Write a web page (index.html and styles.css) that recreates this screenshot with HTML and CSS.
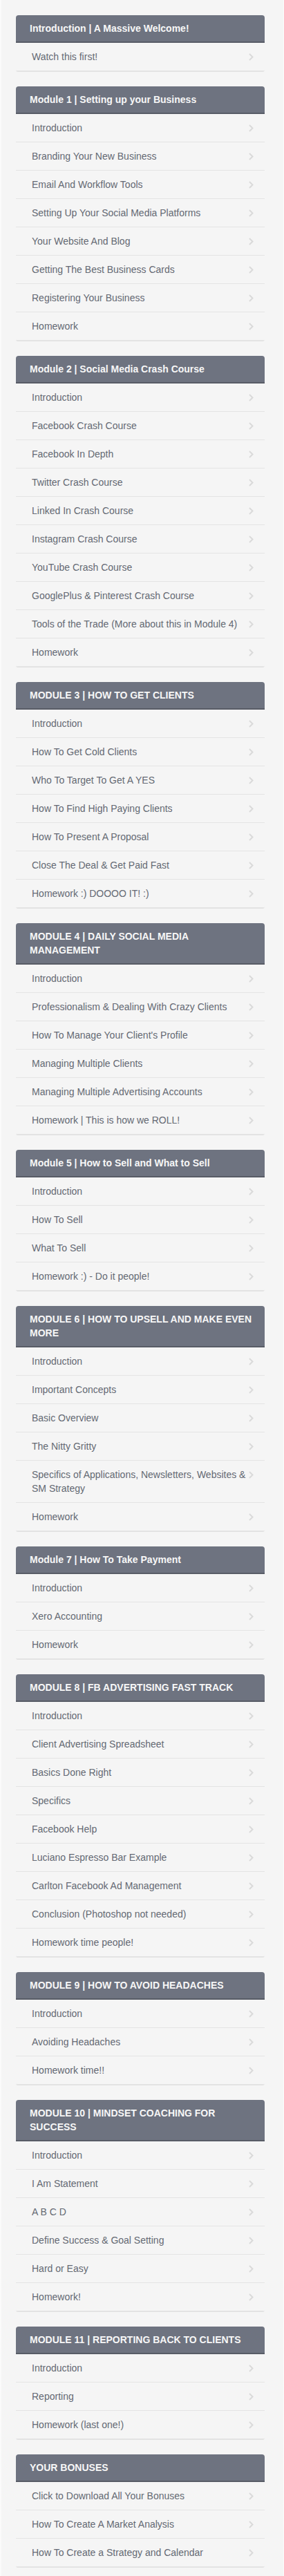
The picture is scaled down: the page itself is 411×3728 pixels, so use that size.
FILE: index.html
```html
<!DOCTYPE html>
<html lang="en">
<head>
<meta charset="utf-8">
<title>Course Curriculum</title>
<link rel="stylesheet" href="styles.css">
</head>
<body>
<div class="page">
  <section class="card">
    <h2 class="card-title">Introduction | A Massive Welcome!</h2>
    <ul class="lessons">
      <li class="lesson"><span class="lesson-name">Watch this first!</span><span class="chev"><svg width="7" height="11" viewBox="0 0 7 11"><polyline points="1,1 5.5,5.5 1,10"/></svg></span></li>
    </ul>
  </section>

  <section class="card">
    <h2 class="card-title">Module 1 | Setting up your Business</h2>
    <ul class="lessons">
      <li class="lesson"><span class="lesson-name">Introduction</span><span class="chev"><svg width="7" height="11" viewBox="0 0 7 11"><polyline points="1,1 5.5,5.5 1,10"/></svg></span></li>
      <li class="lesson"><span class="lesson-name">Branding Your New Business</span><span class="chev"><svg width="7" height="11" viewBox="0 0 7 11"><polyline points="1,1 5.5,5.5 1,10"/></svg></span></li>
      <li class="lesson"><span class="lesson-name">Email And Workflow Tools</span><span class="chev"><svg width="7" height="11" viewBox="0 0 7 11"><polyline points="1,1 5.5,5.5 1,10"/></svg></span></li>
      <li class="lesson"><span class="lesson-name">Setting Up Your Social Media Platforms</span><span class="chev"><svg width="7" height="11" viewBox="0 0 7 11"><polyline points="1,1 5.5,5.5 1,10"/></svg></span></li>
      <li class="lesson"><span class="lesson-name">Your Website And Blog</span><span class="chev"><svg width="7" height="11" viewBox="0 0 7 11"><polyline points="1,1 5.5,5.5 1,10"/></svg></span></li>
      <li class="lesson"><span class="lesson-name">Getting The Best Business Cards</span><span class="chev"><svg width="7" height="11" viewBox="0 0 7 11"><polyline points="1,1 5.5,5.5 1,10"/></svg></span></li>
      <li class="lesson"><span class="lesson-name">Registering Your Business</span><span class="chev"><svg width="7" height="11" viewBox="0 0 7 11"><polyline points="1,1 5.5,5.5 1,10"/></svg></span></li>
      <li class="lesson"><span class="lesson-name">Homework</span><span class="chev"><svg width="7" height="11" viewBox="0 0 7 11"><polyline points="1,1 5.5,5.5 1,10"/></svg></span></li>
    </ul>
  </section>

  <section class="card">
    <h2 class="card-title">Module 2 | Social Media Crash Course</h2>
    <ul class="lessons">
      <li class="lesson"><span class="lesson-name">Introduction</span><span class="chev"><svg width="7" height="11" viewBox="0 0 7 11"><polyline points="1,1 5.5,5.5 1,10"/></svg></span></li>
      <li class="lesson"><span class="lesson-name">Facebook Crash Course</span><span class="chev"><svg width="7" height="11" viewBox="0 0 7 11"><polyline points="1,1 5.5,5.5 1,10"/></svg></span></li>
      <li class="lesson"><span class="lesson-name">Facebook In Depth</span><span class="chev"><svg width="7" height="11" viewBox="0 0 7 11"><polyline points="1,1 5.5,5.5 1,10"/></svg></span></li>
      <li class="lesson"><span class="lesson-name">Twitter Crash Course</span><span class="chev"><svg width="7" height="11" viewBox="0 0 7 11"><polyline points="1,1 5.5,5.5 1,10"/></svg></span></li>
      <li class="lesson"><span class="lesson-name">Linked In Crash Course</span><span class="chev"><svg width="7" height="11" viewBox="0 0 7 11"><polyline points="1,1 5.5,5.5 1,10"/></svg></span></li>
      <li class="lesson"><span class="lesson-name">Instagram Crash Course</span><span class="chev"><svg width="7" height="11" viewBox="0 0 7 11"><polyline points="1,1 5.5,5.5 1,10"/></svg></span></li>
      <li class="lesson"><span class="lesson-name">YouTube Crash Course</span><span class="chev"><svg width="7" height="11" viewBox="0 0 7 11"><polyline points="1,1 5.5,5.5 1,10"/></svg></span></li>
      <li class="lesson"><span class="lesson-name">GooglePlus &amp; Pinterest Crash Course</span><span class="chev"><svg width="7" height="11" viewBox="0 0 7 11"><polyline points="1,1 5.5,5.5 1,10"/></svg></span></li>
      <li class="lesson"><span class="lesson-name">Tools of the Trade (More about this in Module 4)</span><span class="chev"><svg width="7" height="11" viewBox="0 0 7 11"><polyline points="1,1 5.5,5.5 1,10"/></svg></span></li>
      <li class="lesson"><span class="lesson-name">Homework</span><span class="chev"><svg width="7" height="11" viewBox="0 0 7 11"><polyline points="1,1 5.5,5.5 1,10"/></svg></span></li>
    </ul>
  </section>

  <section class="card">
    <h2 class="card-title">MODULE 3 | HOW TO GET CLIENTS</h2>
    <ul class="lessons">
      <li class="lesson"><span class="lesson-name">Introduction</span><span class="chev"><svg width="7" height="11" viewBox="0 0 7 11"><polyline points="1,1 5.5,5.5 1,10"/></svg></span></li>
      <li class="lesson"><span class="lesson-name">How To Get Cold Clients</span><span class="chev"><svg width="7" height="11" viewBox="0 0 7 11"><polyline points="1,1 5.5,5.5 1,10"/></svg></span></li>
      <li class="lesson"><span class="lesson-name">Who To Target To Get A YES</span><span class="chev"><svg width="7" height="11" viewBox="0 0 7 11"><polyline points="1,1 5.5,5.5 1,10"/></svg></span></li>
      <li class="lesson"><span class="lesson-name">How To Find High Paying Clients</span><span class="chev"><svg width="7" height="11" viewBox="0 0 7 11"><polyline points="1,1 5.5,5.5 1,10"/></svg></span></li>
      <li class="lesson"><span class="lesson-name">How To Present A Proposal</span><span class="chev"><svg width="7" height="11" viewBox="0 0 7 11"><polyline points="1,1 5.5,5.5 1,10"/></svg></span></li>
      <li class="lesson"><span class="lesson-name">Close The Deal &amp; Get Paid Fast</span><span class="chev"><svg width="7" height="11" viewBox="0 0 7 11"><polyline points="1,1 5.5,5.5 1,10"/></svg></span></li>
      <li class="lesson"><span class="lesson-name">Homework :) DOOOO IT! :)</span><span class="chev"><svg width="7" height="11" viewBox="0 0 7 11"><polyline points="1,1 5.5,5.5 1,10"/></svg></span></li>
    </ul>
  </section>

  <section class="card">
    <h2 class="card-title">MODULE 4 | DAILY SOCIAL MEDIA MANAGEMENT</h2>
    <ul class="lessons">
      <li class="lesson"><span class="lesson-name">Introduction</span><span class="chev"><svg width="7" height="11" viewBox="0 0 7 11"><polyline points="1,1 5.5,5.5 1,10"/></svg></span></li>
      <li class="lesson"><span class="lesson-name">Professionalism &amp; Dealing With Crazy Clients</span><span class="chev"><svg width="7" height="11" viewBox="0 0 7 11"><polyline points="1,1 5.5,5.5 1,10"/></svg></span></li>
      <li class="lesson"><span class="lesson-name">How To Manage Your Client's Profile</span><span class="chev"><svg width="7" height="11" viewBox="0 0 7 11"><polyline points="1,1 5.5,5.5 1,10"/></svg></span></li>
      <li class="lesson"><span class="lesson-name">Managing Multiple Clients</span><span class="chev"><svg width="7" height="11" viewBox="0 0 7 11"><polyline points="1,1 5.5,5.5 1,10"/></svg></span></li>
      <li class="lesson"><span class="lesson-name">Managing Multiple Advertising Accounts</span><span class="chev"><svg width="7" height="11" viewBox="0 0 7 11"><polyline points="1,1 5.5,5.5 1,10"/></svg></span></li>
      <li class="lesson"><span class="lesson-name">Homework | This is how we ROLL!</span><span class="chev"><svg width="7" height="11" viewBox="0 0 7 11"><polyline points="1,1 5.5,5.5 1,10"/></svg></span></li>
    </ul>
  </section>

  <section class="card">
    <h2 class="card-title">Module 5 | How to Sell and What to Sell</h2>
    <ul class="lessons">
      <li class="lesson"><span class="lesson-name">Introduction</span><span class="chev"><svg width="7" height="11" viewBox="0 0 7 11"><polyline points="1,1 5.5,5.5 1,10"/></svg></span></li>
      <li class="lesson"><span class="lesson-name">How To Sell</span><span class="chev"><svg width="7" height="11" viewBox="0 0 7 11"><polyline points="1,1 5.5,5.5 1,10"/></svg></span></li>
      <li class="lesson"><span class="lesson-name">What To Sell</span><span class="chev"><svg width="7" height="11" viewBox="0 0 7 11"><polyline points="1,1 5.5,5.5 1,10"/></svg></span></li>
      <li class="lesson"><span class="lesson-name">Homework :) - Do it people!</span><span class="chev"><svg width="7" height="11" viewBox="0 0 7 11"><polyline points="1,1 5.5,5.5 1,10"/></svg></span></li>
    </ul>
  </section>

  <section class="card">
    <h2 class="card-title">MODULE 6 | HOW TO UPSELL AND MAKE EVEN MORE</h2>
    <ul class="lessons">
      <li class="lesson"><span class="lesson-name">Introduction</span><span class="chev"><svg width="7" height="11" viewBox="0 0 7 11"><polyline points="1,1 5.5,5.5 1,10"/></svg></span></li>
      <li class="lesson"><span class="lesson-name">Important Concepts</span><span class="chev"><svg width="7" height="11" viewBox="0 0 7 11"><polyline points="1,1 5.5,5.5 1,10"/></svg></span></li>
      <li class="lesson"><span class="lesson-name">Basic Overview</span><span class="chev"><svg width="7" height="11" viewBox="0 0 7 11"><polyline points="1,1 5.5,5.5 1,10"/></svg></span></li>
      <li class="lesson"><span class="lesson-name">The Nitty Gritty</span><span class="chev"><svg width="7" height="11" viewBox="0 0 7 11"><polyline points="1,1 5.5,5.5 1,10"/></svg></span></li>
      <li class="lesson"><span class="lesson-name">Specifics of Applications, Newsletters, Websites &amp; SM Strategy</span><span class="chev"><svg width="7" height="11" viewBox="0 0 7 11"><polyline points="1,1 5.5,5.5 1,10"/></svg></span></li>
      <li class="lesson"><span class="lesson-name">Homework</span><span class="chev"><svg width="7" height="11" viewBox="0 0 7 11"><polyline points="1,1 5.5,5.5 1,10"/></svg></span></li>
    </ul>
  </section>

  <section class="card">
    <h2 class="card-title">Module 7 | How To Take Payment</h2>
    <ul class="lessons">
      <li class="lesson"><span class="lesson-name">Introduction</span><span class="chev"><svg width="7" height="11" viewBox="0 0 7 11"><polyline points="1,1 5.5,5.5 1,10"/></svg></span></li>
      <li class="lesson"><span class="lesson-name">Xero Accounting</span><span class="chev"><svg width="7" height="11" viewBox="0 0 7 11"><polyline points="1,1 5.5,5.5 1,10"/></svg></span></li>
      <li class="lesson"><span class="lesson-name">Homework</span><span class="chev"><svg width="7" height="11" viewBox="0 0 7 11"><polyline points="1,1 5.5,5.5 1,10"/></svg></span></li>
    </ul>
  </section>

  <section class="card">
    <h2 class="card-title">MODULE 8 | FB ADVERTISING FAST TRACK</h2>
    <ul class="lessons">
      <li class="lesson"><span class="lesson-name">Introduction</span><span class="chev"><svg width="7" height="11" viewBox="0 0 7 11"><polyline points="1,1 5.5,5.5 1,10"/></svg></span></li>
      <li class="lesson"><span class="lesson-name">Client Advertising Spreadsheet</span><span class="chev"><svg width="7" height="11" viewBox="0 0 7 11"><polyline points="1,1 5.5,5.5 1,10"/></svg></span></li>
      <li class="lesson"><span class="lesson-name">Basics Done Right</span><span class="chev"><svg width="7" height="11" viewBox="0 0 7 11"><polyline points="1,1 5.5,5.5 1,10"/></svg></span></li>
      <li class="lesson"><span class="lesson-name">Specifics</span><span class="chev"><svg width="7" height="11" viewBox="0 0 7 11"><polyline points="1,1 5.5,5.5 1,10"/></svg></span></li>
      <li class="lesson"><span class="lesson-name">Facebook Help</span><span class="chev"><svg width="7" height="11" viewBox="0 0 7 11"><polyline points="1,1 5.5,5.5 1,10"/></svg></span></li>
      <li class="lesson"><span class="lesson-name">Luciano Espresso Bar Example</span><span class="chev"><svg width="7" height="11" viewBox="0 0 7 11"><polyline points="1,1 5.5,5.5 1,10"/></svg></span></li>
      <li class="lesson"><span class="lesson-name">Carlton Facebook Ad Management</span><span class="chev"><svg width="7" height="11" viewBox="0 0 7 11"><polyline points="1,1 5.5,5.5 1,10"/></svg></span></li>
      <li class="lesson"><span class="lesson-name">Conclusion (Photoshop not needed)</span><span class="chev"><svg width="7" height="11" viewBox="0 0 7 11"><polyline points="1,1 5.5,5.5 1,10"/></svg></span></li>
      <li class="lesson"><span class="lesson-name">Homework time people!</span><span class="chev"><svg width="7" height="11" viewBox="0 0 7 11"><polyline points="1,1 5.5,5.5 1,10"/></svg></span></li>
    </ul>
  </section>

  <section class="card">
    <h2 class="card-title">MODULE 9 | HOW TO AVOID HEADACHES</h2>
    <ul class="lessons">
      <li class="lesson"><span class="lesson-name">Introduction</span><span class="chev"><svg width="7" height="11" viewBox="0 0 7 11"><polyline points="1,1 5.5,5.5 1,10"/></svg></span></li>
      <li class="lesson"><span class="lesson-name">Avoiding Headaches</span><span class="chev"><svg width="7" height="11" viewBox="0 0 7 11"><polyline points="1,1 5.5,5.5 1,10"/></svg></span></li>
      <li class="lesson"><span class="lesson-name">Homework time!!</span><span class="chev"><svg width="7" height="11" viewBox="0 0 7 11"><polyline points="1,1 5.5,5.5 1,10"/></svg></span></li>
    </ul>
  </section>

  <section class="card">
    <h2 class="card-title">MODULE 10 | MINDSET COACHING FOR SUCCESS</h2>
    <ul class="lessons">
      <li class="lesson"><span class="lesson-name">Introduction</span><span class="chev"><svg width="7" height="11" viewBox="0 0 7 11"><polyline points="1,1 5.5,5.5 1,10"/></svg></span></li>
      <li class="lesson"><span class="lesson-name">I Am Statement</span><span class="chev"><svg width="7" height="11" viewBox="0 0 7 11"><polyline points="1,1 5.5,5.5 1,10"/></svg></span></li>
      <li class="lesson"><span class="lesson-name">A B C D</span><span class="chev"><svg width="7" height="11" viewBox="0 0 7 11"><polyline points="1,1 5.5,5.5 1,10"/></svg></span></li>
      <li class="lesson"><span class="lesson-name">Define Success &amp; Goal Setting</span><span class="chev"><svg width="7" height="11" viewBox="0 0 7 11"><polyline points="1,1 5.5,5.5 1,10"/></svg></span></li>
      <li class="lesson"><span class="lesson-name">Hard or Easy</span><span class="chev"><svg width="7" height="11" viewBox="0 0 7 11"><polyline points="1,1 5.5,5.5 1,10"/></svg></span></li>
      <li class="lesson"><span class="lesson-name">Homework!</span><span class="chev"><svg width="7" height="11" viewBox="0 0 7 11"><polyline points="1,1 5.5,5.5 1,10"/></svg></span></li>
    </ul>
  </section>

  <section class="card">
    <h2 class="card-title">MODULE 11 | REPORTING BACK TO CLIENTS</h2>
    <ul class="lessons">
      <li class="lesson"><span class="lesson-name">Introduction</span><span class="chev"><svg width="7" height="11" viewBox="0 0 7 11"><polyline points="1,1 5.5,5.5 1,10"/></svg></span></li>
      <li class="lesson"><span class="lesson-name">Reporting</span><span class="chev"><svg width="7" height="11" viewBox="0 0 7 11"><polyline points="1,1 5.5,5.5 1,10"/></svg></span></li>
      <li class="lesson"><span class="lesson-name">Homework (last one!)</span><span class="chev"><svg width="7" height="11" viewBox="0 0 7 11"><polyline points="1,1 5.5,5.5 1,10"/></svg></span></li>
    </ul>
  </section>

  <section class="card">
    <h2 class="card-title">YOUR BONUSES</h2>
    <ul class="lessons">
      <li class="lesson"><span class="lesson-name">Click to Download All Your Bonuses</span><span class="chev"><svg width="7" height="11" viewBox="0 0 7 11"><polyline points="1,1 5.5,5.5 1,10"/></svg></span></li>
      <li class="lesson"><span class="lesson-name">How To Create A Market Analysis</span><span class="chev"><svg width="7" height="11" viewBox="0 0 7 11"><polyline points="1,1 5.5,5.5 1,10"/></svg></span></li>
      <li class="lesson"><span class="lesson-name">How To Create a Strategy and Calendar</span><span class="chev"><svg width="7" height="11" viewBox="0 0 7 11"><polyline points="1,1 5.5,5.5 1,10"/></svg></span></li>
    </ul>
  </section>
</div>
</body>
</html>
```

FILE: styles.css
```css
html, body {
  margin: 0;
  padding: 0;
}

body {
  background: #fbfbfb;
  font-family: "Liberation Sans", Arial, Helvetica, sans-serif;
  font-size: 14px;
  line-height: 20px;
}

.page {
  margin: 0 1px 0 2px;
  background: #f5f5f5;
  padding: 22px 27px 12px 21px;
  display: flex;
  flex-direction: column;
  gap: 21px;
}

.card {
  border-radius: 4px 4px 3px 3px;
  border-bottom: 1px solid #e2e2e2;
  background: #f5f5f5;
  overflow: hidden;
}

.card-title {
  margin: 0;
  background: #6e7380;
  color: #f7f7f7;
  font-size: 14px;
  font-weight: bold;
  line-height: 20px;
  padding: 9px 10px 9px 20px;
  border-bottom: 2px solid #585c66;
}

.lessons {
  list-style: none;
  margin: 0;
  padding: 0;
}

.lesson {
  display: flex;
  align-items: flex-start;
  gap: 2px;
  padding: 10px 16px 10px 23px;
  border-bottom: 1px solid #e4e4e4;
  color: #646973;
}

.lesson-name {
  flex: 1;
}

.chev {
  flex: none;
  width: 7px;
  height: 20px;
  display: flex;
  align-items: center;
}

.chev svg {
  display: block;
}

.chev polyline {
  fill: none;
  stroke: #dadada;
  stroke-width: 2;
}
```
